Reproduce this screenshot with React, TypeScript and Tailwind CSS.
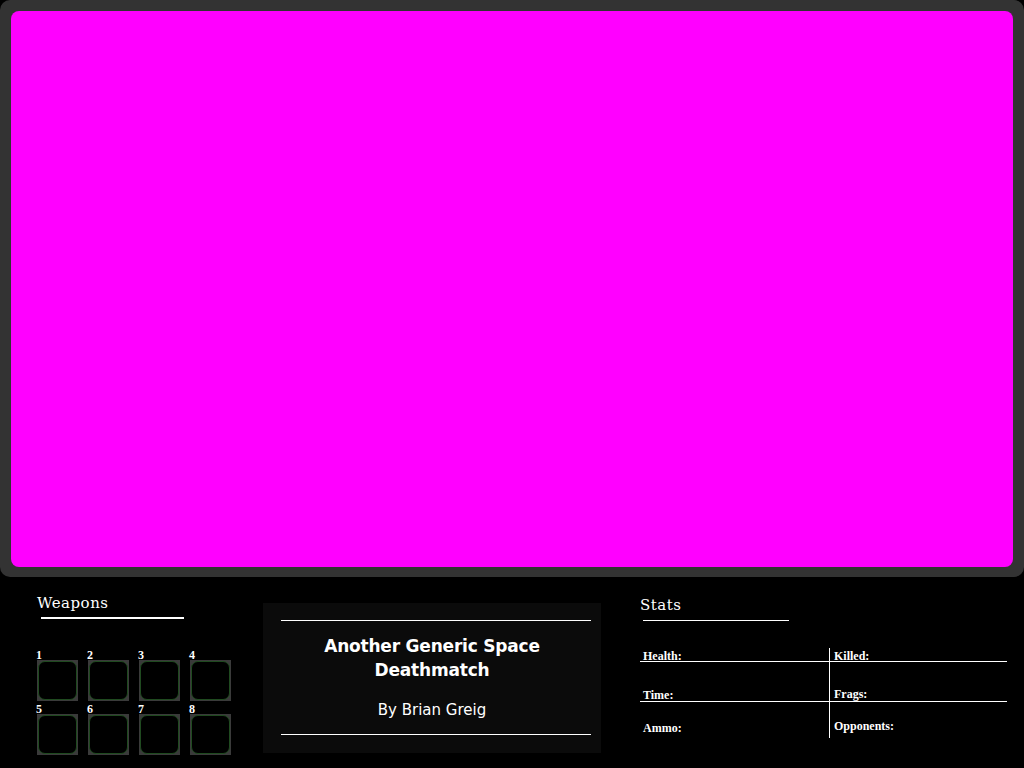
import React from "react";

const serif = { fontFamily: '"DejaVu Serif", "Liberation Serif", serif' };
const boldSerif = { fontFamily: '"Liberation Serif", "DejaVu Serif", serif' };
const sans = { fontFamily: '"DejaVu Sans", Inter, sans-serif' };

function Slot({ n }: { n: number }) {
  return (
    <div className="flex flex-col w-[41px]">
      <div className="text-white text-[12px] leading-[12px] font-bold h-[12px] -ml-[1px] pt-[1px]" style={boldSerif}>
        {n}
      </div>
      <div className="w-[41px] h-[41px] bg-[#3a3a3a] p-[1px]">
        <div className="w-full h-full bg-black rounded-[7px] border border-[#1f4a1f]" />
      </div>
    </div>
  );
}

export default function App() {
  return (
    <div className="w-[1024px] h-[768px] bg-black overflow-hidden flex flex-col">
      <div className="h-[577px] bg-[#333333] rounded-[10px] pt-[11px] pl-[11px] pr-[11px] pb-[10px] flex">
        <div className="flex-1 bg-[#ff00ff] rounded-[8px]" />
      </div>
      <div className="flex-1 flex">
        {/* Weapons */}
        <div className="w-[226px] pl-[37px] pt-[17px] flex flex-col">
          <div className="text-white text-[15px] leading-[18px] tracking-[0.5px]" style={serif}>
            Weapons
          </div>
          <div className="ml-[4px] mt-[5px] w-[143px] h-[2px] bg-white" />
          <div className="mt-[29px] grid grid-cols-4 gap-x-[10px] gap-y-[1px] w-[194px]">
            {[1, 2, 3, 4, 5, 6, 7, 8].map((n) => (
              <Slot key={n} n={n} />
            ))}
          </div>
        </div>
        {/* Center panel */}
        <div className="ml-[37px] mt-[26px] w-[338px] h-[150px] bg-[#0b0b0b] pl-[18px] pr-[10px] pt-[17px] flex flex-col">
          <div className="h-[1px] bg-white" />
          <div
            className="mt-[13px] text-white text-[17px] leading-[24px] font-bold text-center -ml-[8px] tracking-[-0.2px]"
            style={sans}
          >
            Another Generic Space
            <br />
            Deathmatch
          </div>
          <div className="mt-[18px] text-white text-[15px] leading-[20px] font-medium text-center -ml-[8px]" style={sans}>
            By Brian Greig
          </div>
          <div className="mt-[14px] h-[1px] bg-white" />
        </div>
        {/* Stats */}
        <div className="ml-[39px] pt-[19px] w-[370px] flex flex-col">
          <div className="text-white text-[15px] leading-[18px] tracking-[0.5px]" style={serif}>
            Stats
          </div>
          <div className="ml-[3px] mt-[6px] w-[146px] h-[1px] bg-white" />
          <div className="mt-[27px] grid grid-cols-[189px_178px] text-white text-[12px] font-bold" style={boldSerif}>
            <div className="h-[14px] leading-[12px] pl-[3px] pt-[2px] border-b border-white box-border">Health:</div>
            <div className="h-[14px] leading-[12px] pl-[4px] pt-[2px] border-b border-l border-white box-border">Killed:</div>
            <div className="h-[40px] pt-[27px] leading-[12px] pl-[3px] border-b border-white box-border">Time:</div>
            <div className="h-[40px] pt-[26px] leading-[12px] pl-[4px] border-b border-l border-white box-border">Frags:</div>
            <div className="h-[36px] pt-[20px] leading-[12px] pl-[3px] box-border">Ammo:</div>
            <div className="h-[36px] pt-[18px] leading-[12px] pl-[4px] border-l border-white box-border">Opponents:</div>
          </div>
        </div>
      </div>
    </div>
  );
}
